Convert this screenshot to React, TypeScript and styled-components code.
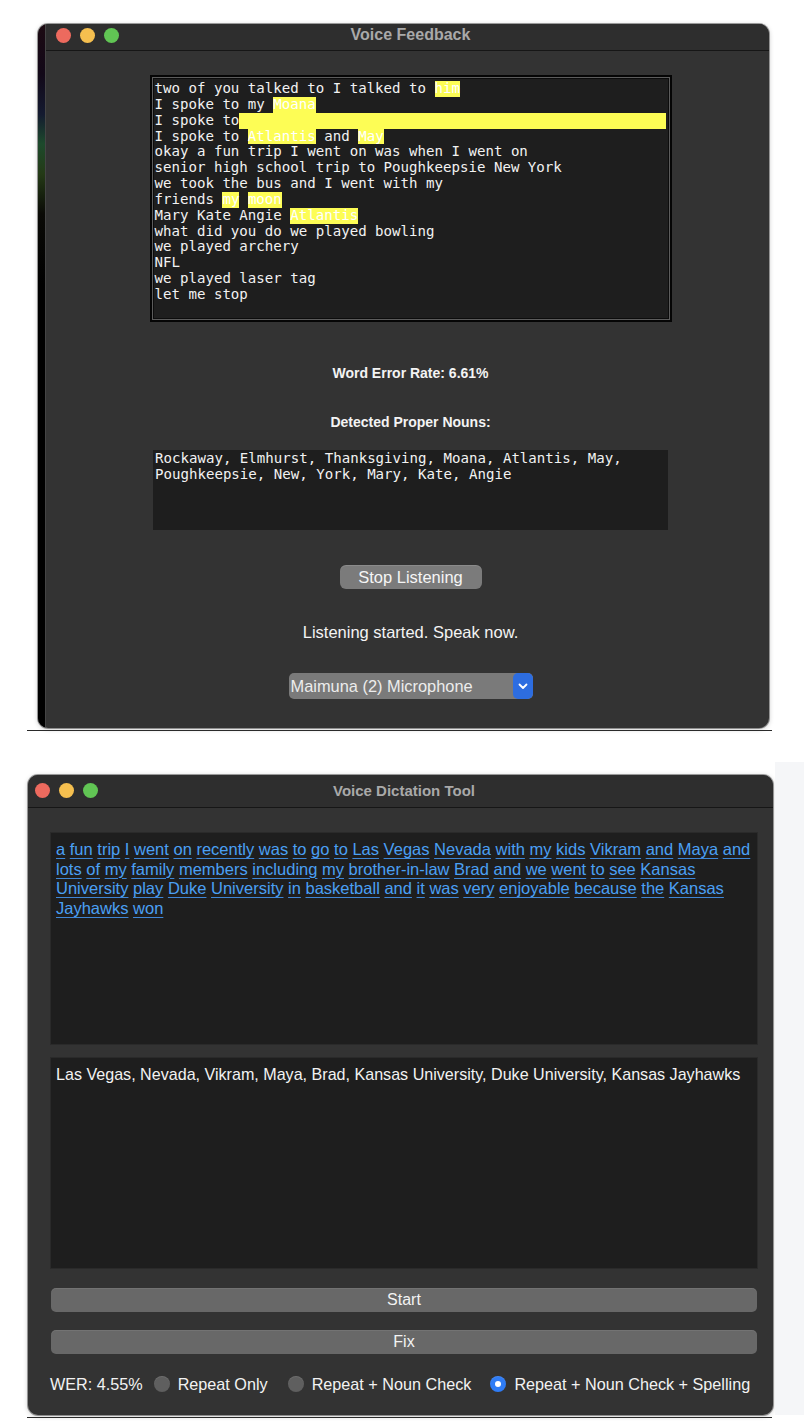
import React from "react";
import styled, { createGlobalStyle } from "styled-components";

const Global = createGlobalStyle`
  html, body { margin: 0; padding: 0; background: #ffffff; }
  body { font-family: "Liberation Sans", Arial, sans-serif; -webkit-font-smoothing: antialiased; }
`;

const Page = styled.div`
  width: 804px;
  height: 1428px;
  overflow: hidden;
  background: #ffffff;
  display: flex;
  flex-direction: column;
`;

const Section = styled.section<{ $top: number }>`
  display: flex;
  flex-direction: column;
  padding: ${(p) => p.$top}px 0 0 27px;
`;

const SectionRow = styled.div`
  display: flex;
  align-items: stretch;
`;

const SideStrip = styled.div`
  flex: 1;
  margin-left: 2px;
  margin-top: -13px;
  background: #f5f6f8;
`;

const Rule = styled.div<{ $gap: number }>`
  width: 745px;
  height: 1px;
  margin-top: ${(p) => p.$gap}px;
  background: #2a2a2a;
`;

const Window = styled.div<{ $w: number; $h: number; $ml: number }>`
  width: ${(p) => p.$w}px;
  height: ${(p) => p.$h}px;
  margin-left: ${(p) => p.$ml}px;
  border-radius: 10px;
  overflow: hidden;
  background: #333333;
  display: flex;
  box-shadow: 0 0 0 1px rgba(0, 0, 0, 0.35), 0 1px 5px rgba(0, 0, 0, 0.25);
  flex: none;
`;

const EdgeStrip = styled.div`
  width: 7px;
  flex: none;
  background: linear-gradient(
    to bottom,
    #1c0a12 0px,
    #120818 50px,
    #141a30 90px,
    #1d4a2c 120px,
    #243a16 150px,
    #0a0a06 190px,
    #000000 260px,
    #000000 100%
  );
  border-right: 1px solid #444;
`;

const WindowMain = styled.div`
  flex: 1;
  display: flex;
  flex-direction: column;
  min-width: 0;
`;

const TitleBar = styled.div<{ $h: number; $pl: number; $pr: number; $pb: number }>`
  height: ${(p) => p.$h}px;
  box-sizing: border-box;
  flex: none;
  display: grid;
  grid-template-columns: 1fr auto 1fr;
  align-items: center;
  padding: 0 ${(p) => p.$pr}px ${(p) => p.$pb}px ${(p) => p.$pl}px;
  background: #2e2e2e;
  border-bottom: 1px solid #161616;
`;

const Lights = styled.div`
  display: flex;
  gap: 9px;
  justify-self: start;
`;

const Light = styled.span<{ $c: string }>`
  width: 15px;
  height: 15px;
  border-radius: 50%;
  background: ${(p) => p.$c};
`;

const Title = styled.div<{ $size: number }>`
  font-family: "Liberation Sans", Arial, sans-serif;
  font-weight: 700;
  font-size: ${(p) => p.$size}px;
  color: #a9a9a9;
  white-space: nowrap;
`;

/* ---------- top window ---------- */

const FeedbackBody = styled.div`
  flex: 1;
  display: flex;
  flex-direction: column;
  align-items: center;
  padding: 24px 0 0 6px;
`;

const TranscriptBox = styled.div`
  width: 522px;
  height: 247px;
  box-sizing: border-box;
  border: 2px solid #050505;
  box-shadow: inset 0 0 0 1px #5c5c5c, inset 0 0 0 2px #0c0c0c;
  background: #1e1e1e;
  padding: 4px 3px 0;
  font-family: "DejaVu Sans Mono", "Liberation Mono", monospace;
  font-size: 14.1px;
  line-height: 15.85px;
  color: #f2f2f2;
  white-space: pre;
`;

const MonoLine = styled.div`
  height: 15.85px;
`;

const FillLine = styled.div`
  display: flex;
  height: 15.85px;
`;

const Hl = styled.span`
  background: #fdfd55;
  color: #ffffff;
  display: inline-block;
  height: 15.85px;
`;

const HlFill = styled.span`
  flex: 1;
  background: #fdfd55;
  margin-right: 1px;
`;

const Label = styled.div<{ $mt: number }>`
  margin-top: ${(p) => p.$mt}px;
  font-family: "Liberation Sans", Arial, sans-serif;
  font-weight: 700;
  font-size: 14px;
  line-height: 17px;
  color: #f4f4f4;
`;

const NounsBox = styled.div`
  margin-top: 19px;
  width: 515px;
  height: 80px;
  box-sizing: border-box;
  padding: 1px 2px;
  background: #1e1e1e;
  font-family: "DejaVu Sans Mono", "Liberation Mono", monospace;
  font-size: 14.1px;
  line-height: 15.85px;
  color: #f2f2f2;
  white-space: pre;
`;

const PillButton = styled.button`
  margin-top: 35px;
  width: 142px;
  height: 24px;
  border: none;
  border-radius: 6px;
  background: #7b7b7b;
  box-shadow: inset 0 1px 0 rgba(255, 255, 255, 0.12);
  color: #f5f5f5;
  font-family: "Liberation Sans", Arial, sans-serif;
  font-size: 16.5px;
  padding: 0;
`;

const Status = styled.div`
  margin-top: 34px;
  font-family: "Liberation Sans", Arial, sans-serif;
  font-size: 16.5px;
  line-height: 19px;
  color: #f4f4f4;
`;

const Select = styled.div`
  margin-top: 31px;
  width: 244px;
  height: 26px;
  display: flex;
  align-items: stretch;
  border-radius: 5px;
  background: #7a7a7a;
  overflow: hidden;
`;

const SelectText = styled.span`
  flex: 1;
  padding-left: 2px;
  display: flex;
  align-items: center;
  font-family: "Liberation Sans", Arial, sans-serif;
  font-size: 16.4px;
  color: #ececec;
`;

const SelectArrow = styled.span`
  width: 20px;
  display: flex;
  align-items: center;
  justify-content: center;
  background: #2d6de0;
  border-radius: 5px;
`;

/* ---------- bottom window ---------- */

const DictationBody = styled.div`
  flex: 1;
  display: flex;
  flex-direction: column;
  padding: 24px 15px 0 22px;
`;

const TextPanel = styled.div<{ $h: number; $mt: number }>`
  height: ${(p) => p.$h}px;
  margin-top: ${(p) => p.$mt}px;
  box-sizing: border-box;
  padding: 7px 5px;
  background: #1e1e1e;
  border: 1px solid #2a2a2a;
  font-family: "Liberation Sans", Arial, sans-serif;
  font-size: 16.1px;
  line-height: 19.7px;
  color: #f2f2f2;
  white-space: nowrap;
`;

const BlueLine = styled.div`
  white-space: nowrap;
  color: #4ba0f4;
  font-size: 16.5px;
`;

const Word = styled.span`
  text-decoration: underline;
  text-decoration-color: #3f86d6;
  text-underline-offset: 3px;
  text-decoration-thickness: 1px;
`;

const WideButton = styled.button<{ $mt: number }>`
  margin: ${(p) => p.$mt}px 1px 0 1px;
  height: 24px;
  border: none;
  border-radius: 5px;
  background: #686868;
  box-shadow: inset 0 1px 0 rgba(255, 255, 255, 0.08);
  color: #f3f3f3;
  font-family: "Liberation Sans", Arial, sans-serif;
  font-size: 16px;
  padding: 0;
`;

const OptionRow = styled.div`
  margin-top: 20px;
  height: 20px;
  display: flex;
  align-items: center;
  font-family: "Liberation Sans", Arial, sans-serif;
  font-size: 16.2px;
  color: #f2f2f2;
  white-space: nowrap;
`;

const Option = styled.label<{ $ml: number }>`
  margin-left: ${(p) => p.$ml}px;
  display: flex;
  align-items: center;
  gap: 8px;
`;

const RadioDot = styled.span<{ $on?: boolean }>`
  width: 16px;
  height: 16px;
  border-radius: 50%;
  box-sizing: border-box;
  display: flex;
  align-items: center;
  justify-content: center;
  background: ${(p) => (p.$on ? "#2f7cf5" : "#5f5f5f")};
  box-shadow: inset 0 1px 0 rgba(255, 255, 255, 0.1);
  &::after {
    content: "";
    width: 6px;
    height: 6px;
    border-radius: 50%;
    background: #ffffff;
    display: ${(p) => (p.$on ? "block" : "none")};
  }
`;

const blueLines = [
  "a fun trip I went on recently was to go to Las Vegas Nevada with my kids Vikram and Maya and",
  "lots of my family members including my brother-in-law Brad and we went to see Kansas",
  "University play Duke University in basketball and it was very enjoyable because the Kansas",
  "Jayhawks won",
];

function UnderlinedLine({ text }: { text: string }) {
  const words = text.split(" ");
  return (
    <BlueLine>
      {words.map((w, i) => (
        <React.Fragment key={i}>
          <Word>{w}</Word>
          {i < words.length - 1 ? " " : ""}
        </React.Fragment>
      ))}
    </BlueLine>
  );
}

function TrafficLights() {
  return (
    <Lights>
      <Light $c="#ed6a5e" />
      <Light $c="#f5bf4f" />
      <Light $c="#61c554" />
    </Lights>
  );
}

export default function App() {
  return (
    <Page>
      <Global />
      <Section $top={24}>
        <Window $w={731} $h={704} $ml={11}>
          <EdgeStrip />
          <WindowMain>
            <TitleBar $h={27} $pl={10} $pr={4} $pb={4}>
              <TrafficLights />
              <Title $size={16}>Voice Feedback</Title>
              <span />
            </TitleBar>
            <FeedbackBody>
              <TranscriptBox>
                <MonoLine>
                  {"two of you talked to I talked to "}
                  <Hl>him</Hl>
                </MonoLine>
                <MonoLine>
                  {"I spoke to my "}
                  <Hl>Moana</Hl>
                </MonoLine>
                <FillLine>
                  {"I spoke to"}
                  <HlFill />
                </FillLine>
                <MonoLine>
                  {"I spoke to "}
                  <Hl>Atlantis</Hl>
                  {" and "}
                  <Hl>May</Hl>
                </MonoLine>
                <MonoLine>okay a fun trip I went on was when I went on</MonoLine>
                <MonoLine>senior high school trip to Poughkeepsie New York</MonoLine>
                <MonoLine>we took the bus and I went with my</MonoLine>
                <MonoLine>
                  {"friends "}
                  <Hl>my</Hl>
                  {" "}
                  <Hl>moon</Hl>
                </MonoLine>
                <MonoLine>
                  {"Mary Kate Angie "}
                  <Hl>Atlantis</Hl>
                </MonoLine>
                <MonoLine>what did you do we played bowling</MonoLine>
                <MonoLine>we played archery</MonoLine>
                <MonoLine>NFL</MonoLine>
                <MonoLine>we played laser tag</MonoLine>
                <MonoLine>let me stop</MonoLine>
              </TranscriptBox>
              <Label $mt={43}>Word Error Rate: 6.61%</Label>
              <Label $mt={32}>Detected Proper Nouns:</Label>
              <NounsBox>
                {"Rockaway, Elmhurst, Thanksgiving, Moana, Atlantis, May,\nPoughkeepsie, New, York, Mary, Kate, Angie"}
              </NounsBox>
              <PillButton>Stop Listening</PillButton>
              <Status>Listening started. Speak now.</Status>
              <Select>
                <SelectText>Maimuna (2) Microphone</SelectText>
                <SelectArrow>
                  <svg width="10" height="7" viewBox="0 0 10 7">
                    <path d="M1.5 1.5 L5 5 L8.5 1.5" fill="none" stroke="#ffffff" strokeWidth="1.8" strokeLinecap="round" strokeLinejoin="round" />
                  </svg>
                </SelectArrow>
              </Select>
            </FeedbackBody>
          </WindowMain>
        </Window>
        <Rule $gap={2} />
      </Section>
      <Section $top={44}>
        <SectionRow>
          <Window $w={745} $h={640} $ml={1}>
            <WindowMain>
              <TitleBar $h={33} $pl={7} $pr={0} $pb={1}>
                <TrafficLights />
                <Title $size={15}>Voice Dictation Tool</Title>
                <span />
              </TitleBar>
              <DictationBody>
                <TextPanel $h={213} $mt={0}>
                  {blueLines.map((l, i) => (
                    <UnderlinedLine key={i} text={l} />
                  ))}
                </TextPanel>
                <TextPanel $h={212} $mt={12}>
                  Las Vegas, Nevada, Vikram, Maya, Brad, Kansas University, Duke University, Kansas Jayhawks
                </TextPanel>
                <WideButton $mt={19}>Start</WideButton>
                <WideButton $mt={18}>Fix</WideButton>
                <OptionRow>
                  WER: 4.55%
                  <Option $ml={11}>
                    <RadioDot />
                    Repeat Only
                  </Option>
                  <Option $ml={20}>
                    <RadioDot />
                    Repeat + Noun Check
                  </Option>
                  <Option $ml={19}>
                    <RadioDot $on />
                    Repeat + Noun Check + Spelling
                  </Option>
                </OptionRow>
              </DictationBody>
            </WindowMain>
          </Window>
          <SideStrip />
        </SectionRow>
        <Rule $gap={2} />
      </Section>
    </Page>
  );
}
